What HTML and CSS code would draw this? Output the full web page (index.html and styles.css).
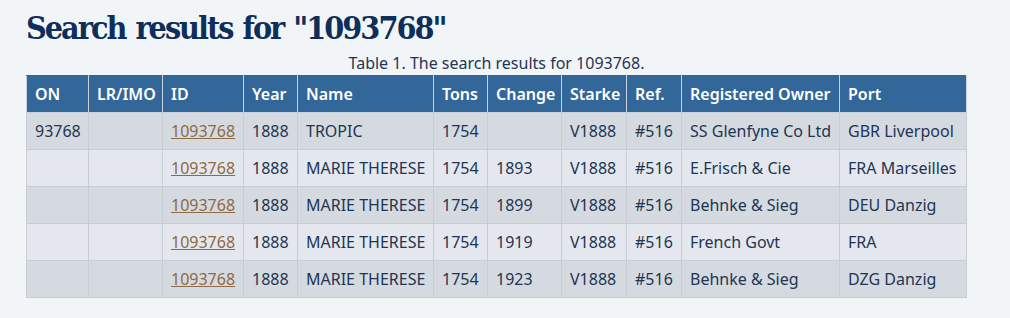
FILE: index.html
```html
<!DOCTYPE html>
<html lang="en">
<head>
<meta charset="utf-8">
<title>Search results</title>
<link rel="stylesheet" href="styles.css">
</head>
<body>
<main class="page">
  <h1 class="title">Search results for "1093768"</h1>
  <table class="results">
    <caption>Table 1. The search results for 1093768.</caption>
    <colgroup>
      <col class="c-on"><col class="c-lr"><col class="c-id"><col class="c-year"><col class="c-name"><col class="c-tons"><col class="c-change"><col class="c-starke"><col class="c-ref"><col class="c-owner"><col class="c-port">
    </colgroup>
    <thead>
      <tr><th>ON</th><th>LR/IMO</th><th>ID</th><th>Year</th><th>Name</th><th>Tons</th><th>Change</th><th>Starke</th><th>Ref.</th><th>Registered Owner</th><th>Port</th></tr>
    </thead>
    <tbody>
      <tr><td>93768</td><td></td><td><a href="#">1093768</a></td><td>1888</td><td>TROPIC</td><td>1754</td><td></td><td>V1888</td><td>#516</td><td>SS Glenfyne Co Ltd</td><td>GBR Liverpool</td></tr>
      <tr><td></td><td></td><td><a href="#">1093768</a></td><td>1888</td><td>MARIE THERESE</td><td>1754</td><td>1893</td><td>V1888</td><td>#516</td><td>E.Frisch &amp; Cie</td><td>FRA Marseilles</td></tr>
      <tr><td></td><td></td><td><a href="#">1093768</a></td><td>1888</td><td>MARIE THERESE</td><td>1754</td><td>1899</td><td>V1888</td><td>#516</td><td>Behnke &amp; Sieg</td><td>DEU Danzig</td></tr>
      <tr><td></td><td></td><td><a href="#">1093768</a></td><td>1888</td><td>MARIE THERESE</td><td>1754</td><td>1919</td><td>V1888</td><td>#516</td><td>French Govt</td><td>FRA</td></tr>
      <tr><td></td><td></td><td><a href="#">1093768</a></td><td>1888</td><td>MARIE THERESE</td><td>1754</td><td>1923</td><td>V1888</td><td>#516</td><td>Behnke &amp; Sieg</td><td>DZG Danzig</td></tr>
    </tbody>
  </table>
</main>
</body>
</html>
```
FILE: styles.css
```css
html, body {
  margin: 0;
  padding: 0;
  background: #f2f5f8;
}
body {
  font-family: "Noto Sans", "Open Sans", sans-serif;
  color: #1e3553;
}
.page {
  padding: 6px 26px 0 26px;
}
.title {
  margin: 0;
  font-family: "DejaVu Serif Condensed", "DejaVu Serif", "Liberation Serif", serif;
  font-stretch: condensed;
  font-weight: bold;
  font-size: 32px;
  line-height: 44px;
  color: #0d2f5a;
  letter-spacing: -2px;
  word-spacing: 2px;
}
.results {
  border-collapse: collapse;
  table-layout: fixed;
  width: 940px;
  font-size: 16px;
  margin-top: 3px;
}
.results caption {
  font-size: 16px;
  line-height: 20px;
  color: #1e3553;
  text-align: center;
  padding-bottom: 2px;
}
.c-on { width: 62px; }
.c-lr { width: 74px; }
.c-id { width: 81px; }
.c-year { width: 54px; }
.c-name { width: 136px; }
.c-tons { width: 54px; }
.c-change { width: 74px; }
.c-starke { width: 65px; }
.c-ref { width: 55px; }
.c-owner { width: 158px; }
.c-port { width: 127px; }
.results th,
.results td {
  text-align: left;
  padding: 8px 8px;
  line-height: 20px;
  white-space: nowrap;
  overflow: hidden;
}
.results th {
  background: #336699;
  color: #ffffff;
  font-weight: 600;
  height: 20px;
  border: 1px solid #c9d3de;
  border-top-color: #336699;
}
.results td {
  border: 1px solid #c8cdd3;
  height: 20px;
}
.results tbody tr:nth-child(odd) td {
  background: #d5dae0;
}
.results tbody tr:nth-child(even) td {
  background: #e4e8ee;
}
.results a {
  color: #8f6a43;
  text-decoration: underline;
}
```
